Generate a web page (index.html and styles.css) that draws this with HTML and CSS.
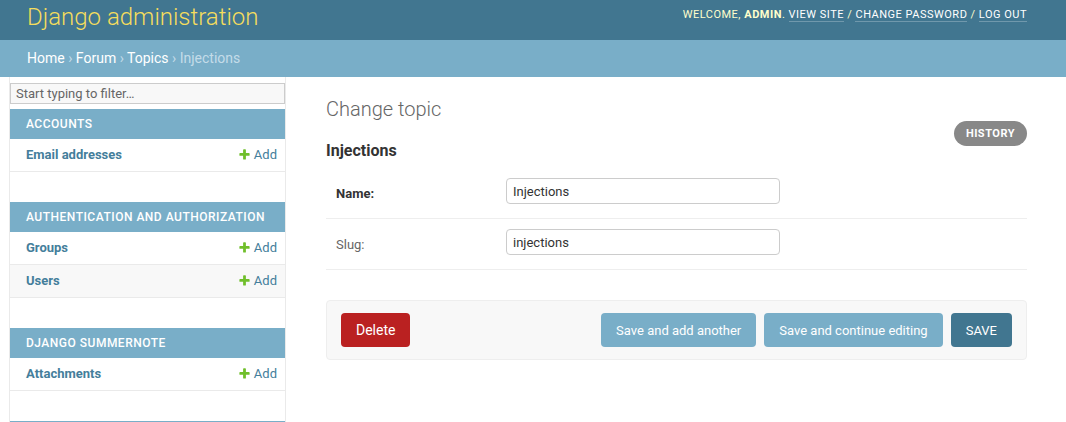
FILE: index.html
```html
<!DOCTYPE html>
<html lang="en">
<head>
<meta charset="utf-8">
<title>Change topic | Django site admin</title>
<link rel="stylesheet" href="styles.css">
</head>
<body>
<div class="container">
  <header class="header">
    <h1 class="site-name"><a href="#">Django administration</a></h1>
    <div class="user-tools">Welcome, <strong>admin</strong>. <a href="#">View site</a> / <a href="#">Change password</a> / <a href="#">Log out</a></div>
  </header>
  <nav class="breadcrumbs"><a href="#">Home</a> › <a href="#">Forum</a> › <a href="#">Topics</a> › Injections</nav>
  <div class="main">
    <div class="toggle-nav"></div>
    <aside class="nav-sidebar">
      <input class="nav-filter" type="search" placeholder="Start typing to filter…">
      <div class="module">
        <div class="caption">Accounts</div>
        <div class="model-row"><a class="model-name" href="#">Email addresses</a><a class="addlink" href="#"><svg class="add-icon" viewBox="0 0 1792 1792"><path fill="#70bf2b" d="M1600 796v192q0 40-28 68t-68 28h-416v416q0 40-28 68t-68 28h-192q-40 0-68-28t-28-68v-416h-416q-40 0-68-28t-28-68v-192q0-40 28-68t68-28h416v-416q0-40 28-68t68-28h192q40 0 68 28t28 68v416h416q40 0 68 28t28 68z"/></svg>Add</a></div>
      </div>
      <div class="module">
        <div class="caption">Authentication and Authorization</div>
        <div class="model-row"><a class="model-name" href="#">Groups</a><a class="addlink" href="#"><svg class="add-icon" viewBox="0 0 1792 1792"><path fill="#70bf2b" d="M1600 796v192q0 40-28 68t-68 28h-416v416q0 40-28 68t-68 28h-192q-40 0-68-28t-28-68v-416h-416q-40 0-68-28t-28-68v-192q0-40 28-68t68-28h416v-416q0-40 28-68t68-28h192q40 0 68 28t28 68v416h416q40 0 68 28t28 68z"/></svg>Add</a></div>
        <div class="model-row alt"><a class="model-name" href="#">Users</a><a class="addlink" href="#"><svg class="add-icon" viewBox="0 0 1792 1792"><path fill="#70bf2b" d="M1600 796v192q0 40-28 68t-68 28h-416v416q0 40-28 68t-68 28h-192q-40 0-68-28t-28-68v-416h-416q-40 0-68-28t-28-68v-192q0-40 28-68t68-28h416v-416q0-40 28-68t68-28h192q40 0 68 28t28 68v416h416q40 0 68 28t28 68z"/></svg>Add</a></div>
      </div>
      <div class="module">
        <div class="caption">Django Summernote</div>
        <div class="model-row"><a class="model-name" href="#">Attachments</a><a class="addlink" href="#"><svg class="add-icon" viewBox="0 0 1792 1792"><path fill="#70bf2b" d="M1600 796v192q0 40-28 68t-68 28h-416v416q0 40-28 68t-68 28h-192q-40 0-68-28t-28-68v-416h-416q-40 0-68-28t-28-68v-192q0-40 28-68t68-28h416v-416q0-40 28-68t68-28h192q40 0 68 28t28 68v416h416q40 0 68 28t28 68z"/></svg>Add</a></div>
      </div>
      <div class="module module-next"></div>
    </aside>
    <main class="content">
      <h1 class="page-title">Change topic</h1>
      <div class="subhead">
        <h2 class="subtitle">Injections</h2>
        <ul class="object-tools"><li><a class="historylink" href="#">History</a></li></ul>
      </div>
      <form class="change-form">
        <fieldset class="fieldset">
          <div class="form-row">
            <label class="required" for="id_name">Name:</label>
            <input class="text-input" id="id_name" type="text" value="Injections">
          </div>
          <div class="form-row">
            <label for="id_slug">Slug:</label>
            <input class="text-input" id="id_slug" type="text" value="injections">
          </div>
        </fieldset>
        <div class="submit-row">
          <a class="deletelink" href="#">Delete</a>
          <input class="btn first" type="submit" value="Save and add another">
          <input class="btn" type="submit" value="Save and continue editing">
          <input class="btn default" type="submit" value="SAVE">
        </div>
      </form>
    </main>
  </div>
</div>
</body>
</html>
```
FILE: styles.css
```css
html, body {
  margin: 0;
  padding: 0;
  overflow: hidden;
}
body {
  font-family: Roboto, "Noto Sans", "Liberation Sans", sans-serif;
  font-size: 14px;
  color: #333;
  background: #fff;
}
a {
  text-decoration: none;
  color: #447e9b;
}

/* Header */
.header {
  height: 40px;
  box-sizing: border-box;
  background: #417690;
  display: flex;
  justify-content: space-between;
  align-items: flex-start;
  padding: 0 39px 0 27px;
}
.site-name {
  margin: 0;
  padding-top: 1px;
  font-size: 24px;
  font-weight: 300;
  line-height: 32px;
}
.site-name a {
  color: #f5dd5d;
}
.user-tools {
  padding-top: 8px;
  font-size: 11px;
  line-height: 14px;
  letter-spacing: 0.5px;
  text-transform: uppercase;
  color: #ffc;
}
.user-tools strong {
  font-weight: 700;
}
.user-tools a {
  color: #fff;
  border-bottom: 1px solid rgba(255, 255, 255, 0.25);
}

/* Breadcrumbs */
.breadcrumbs {
  background: #79aec8;
  padding: 10px 27px;
  font-size: 14px;
  line-height: 17px;
  color: #c4dce8;
}
.breadcrumbs a {
  color: #fff;
}

/* Layout */
.main {
  display: flex;
  align-items: stretch;
  min-height: 345px;
}
.toggle-nav {
  flex: 0 0 10px;
  box-sizing: border-box;
  border-right: 1px solid #eaeaea;
}
.nav-sidebar {
  flex: 0 0 276px;
  box-sizing: border-box;
  border-right: 1px solid #eaeaea;
  padding-top: 6px;
}
.nav-filter {
  display: block;
  box-sizing: border-box;
  width: 100%;
  height: 21px;
  margin: 0 0 5px;
  padding: 1px 5px;
  border: 1px solid #ccc;
  background: #f8f8f8;
  font-family: Roboto, "Noto Sans", sans-serif;
  font-size: 13px;
  color: #333;
  outline: none;
}
.nav-filter::placeholder {
  color: #666;
}
.module {
  margin-bottom: 30px;
}
.module-next {
  height: 30px;
  margin-bottom: 0;
  background: #79aec8;
}
.caption {
  background: #79aec8;
  color: #fff;
  font-size: 12px;
  font-weight: 500;
  line-height: 14px;
  letter-spacing: 0.5px;
  text-transform: uppercase;
  padding: 8px 16px;
}
.model-row {
  display: flex;
  justify-content: space-between;
  align-items: flex-start;
  padding: 8px 8px 8px 16px;
  border-bottom: 1px solid #eaeaea;
  font-size: 13px;
  line-height: 16px;
}
.model-row.alt {
  background: #f8f8f8;
}
.model-name {
  font-weight: 700;
}
.addlink {
  display: flex;
  align-items: flex-start;
}
.add-icon {
  width: 13px;
  height: 13px;
  margin: 1px 3px 0 0;
}

/* Content */
.content {
  flex: 1;
  min-width: 0;
  padding: 20px 39px 0 40px;
}
.page-title {
  margin: 0;
  font-size: 20px;
  line-height: 24px;
  font-weight: 300;
  color: #666;
}
.subhead {
  display: flex;
  justify-content: space-between;
  align-items: flex-start;
  margin-bottom: 8px;
}
.subtitle {
  margin: 20px 0 0;
  font-size: 16px;
  line-height: 19px;
  font-weight: 700;
  color: #333;
}
.object-tools {
  list-style: none;
  margin: 0;
  padding: 0;
}
.historylink {
  display: block;
  padding: 3px 12px;
  background: #888;
  color: #fff;
  font-size: 11px;
  line-height: 19px;
  font-weight: 700;
  letter-spacing: 0.5px;
  text-transform: uppercase;
  border-radius: 15px;
}

.change-form {
  margin: 0;
}
.fieldset {
  margin: 0;
  padding: 0;
  border: 0;
  min-width: 0;
}
.form-row {
  display: flex;
  align-items: flex-start;
  padding: 10px 10px 14px;
  border-bottom: 1px solid #eee;
  font-size: 13px;
}
.form-row label {
  flex: 0 0 170px;
  box-sizing: border-box;
  padding: 6px 10px 0 0;
  line-height: 19px;
  color: #666;
}
.form-row label.required {
  color: #333;
  font-weight: 700;
}
.text-input {
  box-sizing: border-box;
  width: 274px;
  height: 26px;
  padding: 5px 6px;
  border: 1px solid #ccc;
  border-radius: 4px;
  font-family: Roboto, "Noto Sans", sans-serif;
  font-size: 13px;
  color: #333;
  background: #fff;
  margin: 0;
}

.submit-row {
  display: flex;
  align-items: center;
  gap: 8px;
  margin-top: 30px;
  padding: 12px 14px;
  background: #f8f8f8;
  border: 1px solid #eee;
  border-radius: 4px;
}
.deletelink {
  display: block;
  padding: 10px 15px;
  line-height: 14px;
  font-size: 14px;
  color: #fff;
  background: #ba2121;
  border-radius: 4px;
}
.btn {
  height: 34px;
  box-sizing: border-box;
  margin: 0;
  padding: 0 15px;
  border: 0;
  border-radius: 4px;
  background: #79aec8;
  color: #fff;
  font-family: Roboto, "Noto Sans", sans-serif;
  font-size: 13px;
  cursor: pointer;
}
.btn.first {
  margin-left: auto;
}
.btn.default {
  background: #417690;
}
```
